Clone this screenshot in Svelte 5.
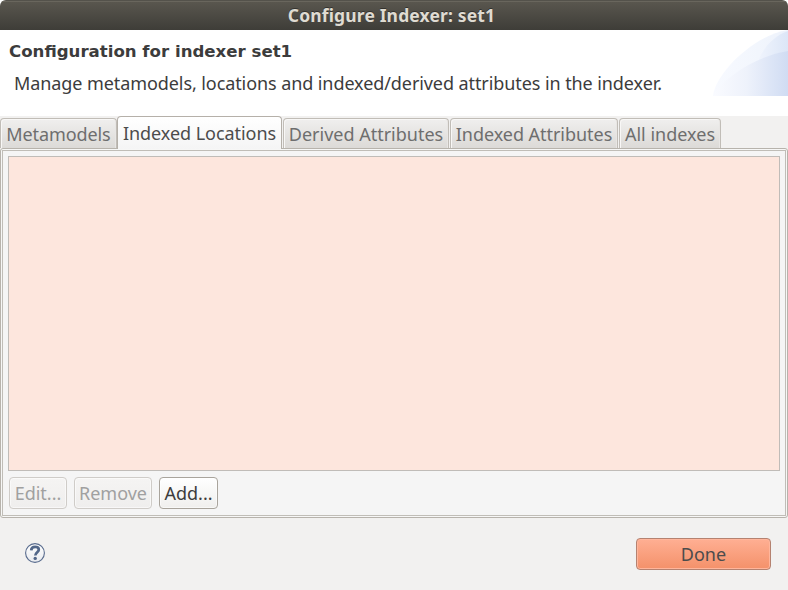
<script>
  const tabs = [
    { label: 'Metamodels', width: 117, spacing: -0.1 },
    { label: 'Indexed Locations', width: 165, spacing: -0.05 },
    { label: 'Derived Attributes', width: 166, spacing: 0 },
    { label: 'Indexed Attributes', width: 168, spacing: -0.04 },
    { label: 'All indexes', width: 102, spacing: 0 }
  ];
  let active = $state(1);
</script>

<div class="window">
  <header class="titlebar"><span>Configure Indexer: set1</span></header>

  <section class="banner">
    <div class="copy">
      <h1>Configuration for indexer set1</h1>
      <p><span>Manage metamodels, locations and indexed/derived attributes in the indexer.</span></p>
    </div>
    <svg class="art" width="76" height="66" viewBox="0 0 76 66">
      <defs>
        <linearGradient id="outer"><stop offset="0" stop-color="#f8faff" /><stop offset=".6" stop-color="#f2f6fd" /><stop offset="1" stop-color="#edf2fb" /></linearGradient>
        <linearGradient id="right"><stop offset="0" stop-color="#f1f5fd" /><stop offset="1" stop-color="#dce6f7" /></linearGradient>
        <linearGradient id="inner"><stop offset="0" stop-color="#fafbff" /><stop offset=".45" stop-color="#eef2fb" /><stop offset="1" stop-color="#d0dcf3" /></linearGradient>
      </defs>
      <path d="M1 66C4 41 45 4 76 0V66Z" fill="url(#outer)" />
      <path d="M44 38C49 18 62 6 76 1V66H44Z" fill="url(#right)" />
      <path d="M1 66C12 46 48 25 76 21V66Z" fill="url(#inner)" />
    </svg>
  </section>

  <nav class="tabs">
    {#each tabs as tab, i}
      <button class="tab" class:active={active === i} style="width:{tab.width}px" onclick={() => (active = i)}>
        <span style="letter-spacing:{tab.spacing}px">{tab.label}</span>
      </button>
    {/each}
  </nav>

  <main class="panel">
    <div class="inner">
      <div class="list"></div>
      <div class="actions">
        <button class="btn edit" disabled><span>Edit...</span></button>
        <button class="btn remove" disabled><span>Remove</span></button>
        <button class="btn add"><span>Add...</span></button>
      </div>
    </div>
  </main>

  <footer>
    <svg class="help" width="22" height="22" viewBox="0 0 22 22">
      <defs><linearGradient id="disc" x2="0" y2="1"><stop stop-color="#fff" /><stop offset="1" stop-color="#e8eaee" /></linearGradient></defs>
      <circle cx="11" cy="11" r="9.4" fill="url(#disc)" stroke="#586b8d" stroke-width="1.1" />
      <path d="M7.2 8.4C7.3 5.9 8.9 4.9 11.1 4.9C13.5 4.9 14.8 6 14.8 7.7C14.8 10.1 11.3 10.4 11.3 13.6" fill="none" stroke="#526789" stroke-width="2.7" />
      <circle cx="11.2" cy="16.4" r="1.7" fill="#526789" />
    </svg>
    <button class="done"><span>Done</span></button>
  </footer>
</div>

<style>
  :global(body) { background: #fff; overflow: hidden; }
  * { box-sizing: border-box; }
  .window {
    width: 788px; height: 590px; display: flex; flex-direction: column;
    background: #f2f1f0; color: #3c3c3c;
    font: 18px/24px "Noto Sans", "Open Sans", sans-serif;
    border-radius: 6px 6px 0 0; overflow: hidden;
  }
  span { white-space: nowrap; }
  button { font: inherit; color: inherit; padding: 0; cursor: default; display: flex; align-items: center; justify-content: center; }
  .titlebar {
    height: 30px; flex: none; display: flex; justify-content: center; align-items: center;
    background: linear-gradient(#5a574f, #3e3d38); border-top: 1px solid #54524b; box-shadow: inset 0 1px #69665d;
    color: #dfdbd2; font-weight: 700; font-size: 17.5px; letter-spacing: .14px; padding: 0 5px 1px 0; text-shadow: 0 -1px #33322e;
  }
  .banner { height: 86px; flex: none; background: #fff; display: flex; justify-content: space-between; align-items: flex-start; }
  .copy { padding-top: 10px; }
  h1 { margin: 0 0 0 9px; font: 700 16.6px/24px "DejaVu Sans", sans-serif; }
  p { margin: 7px 0 0 14px; letter-spacing: -.083px; }
  .art { flex: none; }
  .tabs { height: 32px; flex: none; display: flex; align-items: flex-end; position: relative; z-index: 1; }
  .tab {
    flex: none; height: 30px; border: 1px solid #c1bdb7; border-bottom: 0; border-radius: 4px 4px 0 0; margin-right: 1px;
    background: linear-gradient(#f0efee, #dcdad7); box-shadow: inset 1px 1px #f8f7f6, inset -1px 0 #e8e6e4; color: #6e6e6e; padding-top: 1px;
  }
  .tab:first-child { margin-right: 0; }
  .tab.active { height: 33px; margin-bottom: -1px; background: linear-gradient(#fff, #f5f5f5); border-color: #b5b0a9; box-shadow: none; color: #4c4c4c; padding: 0 0 1px; }
  .panel { height: 370px; flex: none; border: 1px solid #b7b3ac; border-radius: 3px; padding: 1px; background: #f7f7f6; }
  .inner { height: 366px; border: 1px solid #c0bdb7; background: #f5f5f5; padding: 5px; }
  .list { width: 772px; height: 315px; background: #fde6dd; border: 1px solid #c0bcb8; }
  .actions { display: flex; margin: 6px 0 0 1px; }
  .btn { height: 32px; border: 1px solid #a9a49c; border-radius: 4px; background: linear-gradient(#fff, #f0efed); box-shadow: inset 0 0 0 1px #fff8; }
  .btn:disabled { color: #a0a0a0; border-color: #cfccc8; background: linear-gradient(#f5f4f3, #efeeed); }
  .edit { width: 58px; margin-right: 7px; }
  .remove { width: 78px; margin-right: 7px; }
  .add { width: 59px; }
  footer { height: 72px; flex: none; display: flex; justify-content: space-between; align-items: flex-start; padding: 20px 17px 0 24px; }
  .help { margin-top: 4px; }
  .done {
    width: 135px; height: 32px; border: 1px solid #b58270; border-radius: 4px;
    background: linear-gradient(#ffaf93, #f4916a); box-shadow: inset 0 0 0 1px #ffb69c; color: #4c4c4c;
  }
</style>
